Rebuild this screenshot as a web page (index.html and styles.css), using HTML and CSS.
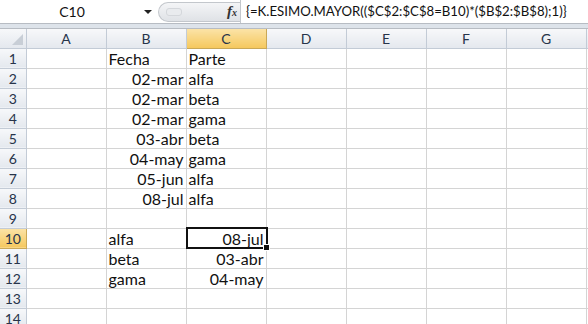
FILE: index.html
```html
<html>
  <head>
    <link rel="stylesheet" href="styles.css">
  </head>
  <body>
    <div class="formula-bar">
      <div class="name-box">
        <span class="name">C10</span>
        <span class="arrow"></span>
      </div>
      <div class="pill">
        <span class="grip"></span>
        <span class="fx">f<sub>x</sub></span>
      </div>
      <div class="formula">{=K.ESIMO.MAYOR(($C$2:$C$8=B10)*($B$2:$B$8);1)}</div>
    </div>
    <div class="band"></div>
    <table class="sheet">
      <colgroup>
        <col class="c-head">
        <col class="c-col"><col class="c-col"><col class="c-col"><col class="c-col">
        <col class="c-col"><col class="c-col"><col class="c-col">
        <col class="c-rest">
      </colgroup>
      <tr class="heads">
        <th class="corner"><span class="tri"></span></th>
        <th>A</th><th>B</th><th class="hot">C</th><th>D</th><th>E</th><th>F</th><th>G</th><th></th>
      </tr>
      <tr><th>1</th><td></td><td>Fecha</td><td>Parte</td><td></td><td></td><td></td><td></td><td></td></tr>
      <tr><th>2</th><td></td><td class="num">02-mar</td><td>alfa</td><td></td><td></td><td></td><td></td><td></td></tr>
      <tr><th>3</th><td></td><td class="num">02-mar</td><td>beta</td><td></td><td></td><td></td><td></td><td></td></tr>
      <tr><th>4</th><td></td><td class="num">02-mar</td><td>gama</td><td></td><td></td><td></td><td></td><td></td></tr>
      <tr><th>5</th><td></td><td class="num">03-abr</td><td>beta</td><td></td><td></td><td></td><td></td><td></td></tr>
      <tr><th>6</th><td></td><td class="num">04-may</td><td>gama</td><td></td><td></td><td></td><td></td><td></td></tr>
      <tr><th>7</th><td></td><td class="num">05-jun</td><td>alfa</td><td></td><td></td><td></td><td></td><td></td></tr>
      <tr><th>8</th><td></td><td class="num">08-jul</td><td>alfa</td><td></td><td></td><td></td><td></td><td></td></tr>
      <tr><th>9</th><td></td><td></td><td></td><td></td><td></td><td></td><td></td><td></td></tr>
      <tr><th class="hot">10</th><td></td><td>alfa</td><td class="num active">08-jul</td><td></td><td></td><td></td><td></td><td></td></tr>
      <tr><th>11</th><td></td><td>beta</td><td class="num">03-abr</td><td></td><td></td><td></td><td></td><td></td></tr>
      <tr><th>12</th><td></td><td>gama</td><td class="num">04-may</td><td></td><td></td><td></td><td></td><td></td></tr>
      <tr><th>13</th><td></td><td></td><td></td><td></td><td></td><td></td><td></td><td></td></tr>
      <tr><th>14</th><td></td><td></td><td></td><td></td><td></td><td></td><td></td><td></td></tr>
    </table>
  </body>
</html>
```
FILE: styles.css
```css
html {
  background: white;
  font-family: Lato, "Liberation Sans", sans-serif;
  font-size: 14px;
  color: #111;
}
body {
  margin: 0;
  width: 588px;
  height: 324px;
  overflow: hidden;
}
.formula-bar {
  display: flex;
  height: 23px;
  align-items: center;
  background: white;
  border-bottom: 1px solid #b7bcc3;
}
.name-box {
  width: 158px;
  display: flex;
  align-items: center;
}
.name {
  flex: 1;
  text-align: center;
  font-size: 14px;
}
.arrow {
  width: 0;
  height: 0;
  border-left: 4px solid transparent;
  border-right: 4px solid transparent;
  border-top: 4px solid #222;
  margin-right: 6px;
}
.pill {
  width: 82px;
  height: 20px;
  display: flex;
  align-items: center;
  justify-content: space-between;
  border-radius: 10px 0 0 10px;
  background: linear-gradient(#f4f5f7, #dfe2e6);
  border: 1px solid #c3c7cc;
  border-right: none;
  box-sizing: border-box;
}
.grip {
  width: 14px;
  height: 6px;
  margin-left: 7px;
  border-radius: 3px;
  background: #e9ebee;
  border: 1px solid #d4d7db;
}
.fx {
  font-family: "Liberation Serif", serif;
  font-style: italic;
  font-weight: bold;
  font-size: 15px;
  color: #333;
  margin-right: 3px;
}
.fx sub {
  font-size: 10px;
  vertical-align: baseline;
}
.formula {
  flex: 1;
  padding-left: 5px;
  height: 23px;
  line-height: 22px;
  border-left: 1px solid #c3c7cc;
  white-space: nowrap;
  font-size: 13.2px;
}
.band {
  height: 4px;
  background: #dde3ea;
  border-bottom: 1px solid #b7bcc3;
}
.sheet {
  border-collapse: collapse;
  table-layout: fixed;
  width: 592px;
}
.c-head { width: 26px; }
.c-col { width: 80px; }
.c-rest { width: 6px; }
.sheet tr {
  height: 20px;
}
.sheet .heads {
  height: 19px;
}
.sheet th {
  font-weight: normal;
  font-size: 14px;
  color: #27344a;
  background: linear-gradient(#f7f8fa, #e4e8ee);
  border-right: 1px solid #c3cbd6;
  border-bottom: 1px solid #c3cbd6;
  padding: 0;
  text-align: center;
}
.sheet th.hot {
  background: linear-gradient(#fbe3a7, #f5c85e);
  border-color: #c9a857;
}
.sheet th.corner {
  position: relative;
}
.tri {
  position: absolute;
  right: 3px;
  bottom: 3px;
  width: 0;
  height: 0;
  border-left: 11px solid transparent;
  border-bottom: 11px solid #c8ced6;
}
.sheet td {
  border-right: 1px solid #d4d4d4;
  border-bottom: 1px solid #d4d4d4;
  padding: 0 2px;
  white-space: nowrap;
  overflow: visible;
  line-height: 19px;
}
.sheet td.num {
  text-align: right;
}
.sheet td.active {
  position: relative;
}
.sheet td.active::before {
  content: "";
  position: absolute;
  left: -1px;
  top: -2px;
  right: -2px;
  bottom: -1px;
  border: 2px solid #111;
}
.sheet td.active::after {
  content: "";
  position: absolute;
  right: -4px;
  bottom: -3px;
  width: 5px;
  height: 5px;
  background: #111;
  border: 1px solid white;
}
```
